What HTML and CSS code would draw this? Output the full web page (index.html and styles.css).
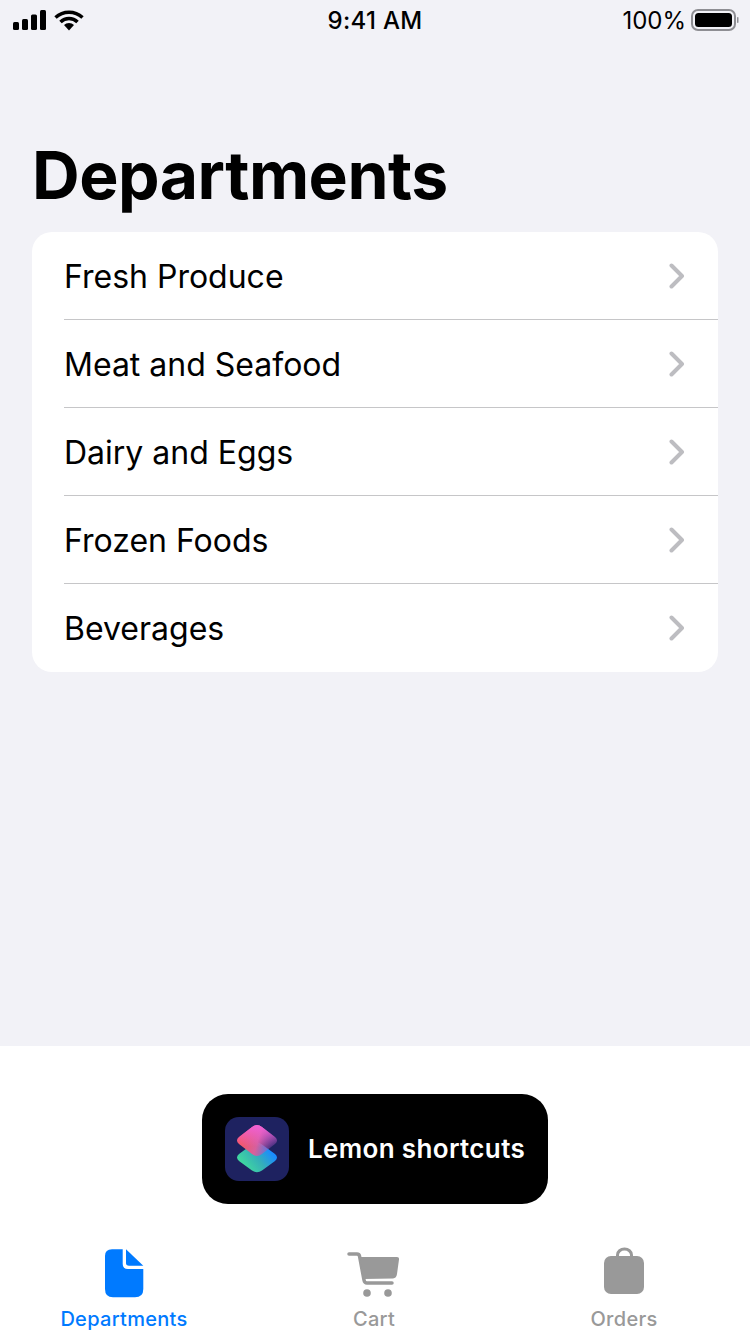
FILE: index.html
```html
<!DOCTYPE html>
<html lang="en">
<head>
    <meta charset="UTF-8">
    <meta name="viewport" content="width=device-width, initial-scale=1.0">
    <title>Departments</title>
    <link rel="stylesheet" href="styles.css">
</head>
<body>
    <div class="page">
        <div class="statusBar">
            <div class="statusLeft">
                <svg class="signal" width="34" height="22" viewBox="0 0 34 22">
                    <rect x="1" y="13" width="6" height="8" rx="1.5"/>
                    <rect x="10" y="10" width="6" height="11" rx="1.5"/>
                    <rect x="19" y="5.5" width="6" height="15.5" rx="1.5"/>
                    <rect x="28" y="1" width="6" height="20" rx="1.5"/>
                </svg>
                <svg class="wifi" width="30" height="22" viewBox="0 0 30 22">
                    <path d="M1.500 8.500 A20 20 0 0 1 28.500 8.500" fill="none" stroke="#000" stroke-width="3.500"/>
                    <path d="M6.500 13 A12 12 0 0 1 23.500 13" fill="none" stroke="#000" stroke-width="3.500"/>
                    <path d="M10 16 A7 7 0 0 1 20 16 L15 21.500 Z"/>
                </svg>
            </div>
            <div class="statusTime">9:41 AM</div>
            <div class="statusRight">
                <span>100%</span>
                <svg class="battery" width="48" height="24" viewBox="0 0 48 24">
                    <rect x="1" y="2" width="43" height="20" rx="6" fill="none" stroke="#8e8e93" stroke-width="2"/>
                    <rect x="4" y="5" width="37" height="14" rx="3.500"/>
                    <rect x="46" y="9" width="1.500" height="6" rx="0.700" fill="#8e8e93"/>
                </svg>
            </div>
        </div>

        <div class="main">
            <h1 class="title">Departments</h1>
            <div class="list">
                <div class="row">
                    <div class="rowInner"><span>Fresh Produce</span><svg class="chevron" width="16" height="26" viewBox="0 0 16 26"><path d="M2.500 2.500 L13 13 L2.500 23.500"/></svg></div>
                </div>
                <div class="row">
                    <div class="rowInner"><span>Meat and Seafood</span><svg class="chevron" width="16" height="26" viewBox="0 0 16 26"><path d="M2.500 2.500 L13 13 L2.500 23.500"/></svg></div>
                </div>
                <div class="row">
                    <div class="rowInner"><span>Dairy and Eggs</span><svg class="chevron" width="16" height="26" viewBox="0 0 16 26"><path d="M2.500 2.500 L13 13 L2.500 23.500"/></svg></div>
                </div>
                <div class="row">
                    <div class="rowInner"><span>Frozen Foods</span><svg class="chevron" width="16" height="26" viewBox="0 0 16 26"><path d="M2.500 2.500 L13 13 L2.500 23.500"/></svg></div>
                </div>
                <div class="row">
                    <div class="rowInner"><span>Beverages</span><svg class="chevron" width="16" height="26" viewBox="0 0 16 26"><path d="M2.500 2.500 L13 13 L2.500 23.500"/></svg></div>
                </div>
            </div>
        </div>

        <div class="bottom">
            <div class="shortcutArea">
                <div class="shortcutButton">
                    <div class="shortcutIcon">
                        <svg width="64" height="64" viewBox="0 0 64 64">
                            <defs>
                                <linearGradient id="lower" x1="0.200" y1="0.800" x2="0.900" y2="0.400">
                                    <stop offset="0" stop-color="#3fd6a0"/>
                                    <stop offset="0.500" stop-color="#35b0b8"/>
                                    <stop offset="1" stop-color="#1a8cff"/>
                                </linearGradient>
                                <linearGradient id="upper" x1="0.050" y1="0.600" x2="0.900" y2="0.800">
                                    <stop offset="0" stop-color="#f6565e"/>
                                    <stop offset="0.500" stop-color="#d85f9c"/>
                                    <stop offset="1" stop-color="#a050c8" stop-opacity="0.250"/>
                                </linearGradient>
                                <linearGradient id="upperTop" x1="0.500" y1="0" x2="0.500" y2="0.700">
                                    <stop offset="0" stop-color="#f060d8"/>
                                    <stop offset="1" stop-color="#f060d8" stop-opacity="0"/>
                                </linearGradient>
                            </defs>
                            <path d="M27 27.500 Q32 23.500 37 27.500 L50 37 Q54 40.500 50 44 L37 53.500 Q32 57 27 53.500 L14 44 Q10 40.500 14 37 Z" fill="url(#lower)"/>
                            <path d="M27 10 Q32 6 37 10 L50 20 Q54 23.500 50 27 L37 37 Q32 41 27 37 L14 27 Q10 23.500 14 20 Z" fill="url(#upper)"/>
                            <path d="M27 10 Q32 6 37 10 L50 20 Q54 23.500 50 27 L37 37 Q32 41 27 37 L14 27 Q10 23.500 14 20 Z" fill="url(#upperTop)"/>
                        </svg>
                    </div>
                    <span class="shortcutText">Lemon shortcuts</span>
                </div>
            </div>
            <div class="tabBar">
                <div class="tab active">
                    <svg class="tabIcon" width="40" height="52" viewBox="0 0 40 52">
                        <path d="M8 2.300 H18.700 V17 Q18.700 22 24 22 H39.300 V42 Q39.300 50.300 31 50.300 H9 Q1 50.300 1 42 V9 Q1 2.300 8 2.300 Z"/>
                        <path d="M22 2.300 L39.300 18.800 H25 Q22 18.800 22 16 Z"/>
                    </svg>
                    <span>Departments</span>
                </div>
                <div class="tab">
                    <svg class="tabIcon" width="54" height="52" viewBox="0 0 54 52">
                        <path d="M2 7 H10 Q12 7 12.500 9 L17 33 Q17.500 36 20 36 H45" fill="none" stroke="#999" stroke-width="3.500" stroke-linecap="round" stroke-linejoin="round"/>
                        <path d="M13 10 H50 Q52.500 10 52 12.500 L50 27 Q49.500 31 46 31.500 L16.500 32 Z"/>
                        <circle cx="20" cy="46" r="3.800"/>
                        <circle cx="41" cy="46" r="3.800"/>
                    </svg>
                    <span>Cart</span>
                </div>
                <div class="tab">
                    <svg class="tabIcon" width="42" height="52" viewBox="0 0 42 52">
                        <path d="M14.500 11 V8 A7 6 0 0 1 28.500 8 V11" fill="none" stroke="#999" stroke-width="3"/>
                        <rect x="1" y="9" width="40" height="38" rx="7"/>
                    </svg>
                    <span>Orders</span>
                </div>
            </div>
        </div>
    </div>
</body>
</html>
```

FILE: styles.css
```css
* {
    box-sizing: border-box;
}
body {
    margin: 0;
    font-family: Inter, "Liberation Sans", sans-serif;
    color: #000;
    background-color: #f2f2f7;
}
.page {
    height: 1334px;
    width: 750px;
    display: flex;
    flex-direction: column;
    overflow: hidden;
}

/* status bar */
.statusBar {
    height: 40px;
    padding: 0 12px;
    display: flex;
    align-items: center;
    justify-content: space-between;
    position: relative;
    flex-shrink: 0;
}
.statusLeft {
    display: flex;
    align-items: center;
    gap: 8px;
}
.statusTime {
    position: absolute;
    left: 0;
    right: 0;
    text-align: center;
    font-size: 24px;
    font-weight: 500;
    letter-spacing: 0.3px;
}
.statusRight {
    display: flex;
    align-items: center;
    gap: 5px;
    font-size: 24px;
    margin-right: -1px;
}

/* department list */
.main {
    flex: 1;
    padding: 0 32px;
}
.title {
    margin: 0;
    padding-top: 95px;
    height: 192px;
    font-size: 66px;
    line-height: 80px;
    font-weight: 700;
    letter-spacing: -0.5px;
}
.list {
    background-color: #fff;
    border-radius: 20px;
    overflow: hidden;
}
.row {
    height: 88px;
    padding-left: 32px;
    font-size: 32px;
}
.rowInner {
    height: 88px;
    padding-top: 1px;
    padding-right: 33px;
    display: flex;
    align-items: center;
    justify-content: space-between;
    border-bottom: 1px solid #c6c6c8;
}
.row:last-child .rowInner {
    border-bottom: none;
}
.chevron {
    margin-top: -1px;
}
.chevron path {
    fill: none;
    stroke: #bdbdc1;
    stroke-width: 4;
    stroke-linecap: round;
    stroke-linejoin: round;
}

/* bottom panel */
.bottom {
    height: 288px;
    flex-shrink: 0;
    background-color: #fff;
    display: flex;
    flex-direction: column;
}
.shortcutArea {
    padding-top: 48px;
    height: 201px;
    display: flex;
    justify-content: center;
}
.shortcutButton {
    height: 110px;
    width: 346px;
    padding-left: 23px;
    background-color: #000;
    border-radius: 26px;
    display: flex;
    align-items: center;
    gap: 19px;
}
.shortcutIcon {
    height: 64px;
    width: 64px;
    border-radius: 14px;
    background-color: #1e2260;
    overflow: hidden;
}
.shortcutIcon svg {
    display: block;
}
.shortcutText {
    color: #fff;
    font-size: 26px;
    font-weight: 600;
    letter-spacing: 0.35px;
    margin-top: -1px;
}
.tabBar {
    flex: 1;
    display: flex;
    margin-left: -1px;
}
.tab {
    width: 250px;
    display: flex;
    flex-direction: column;
    align-items: center;
    color: #999;
    font-size: 20px;
    font-weight: 500;
    letter-spacing: 0.3px;
    gap: 8px;
}
.tabIcon {
    fill: #999;
    display: block;
}
.tab.active {
    color: #007aff;
}
.tab.active .tabIcon {
    fill: #007aff;
}
```
